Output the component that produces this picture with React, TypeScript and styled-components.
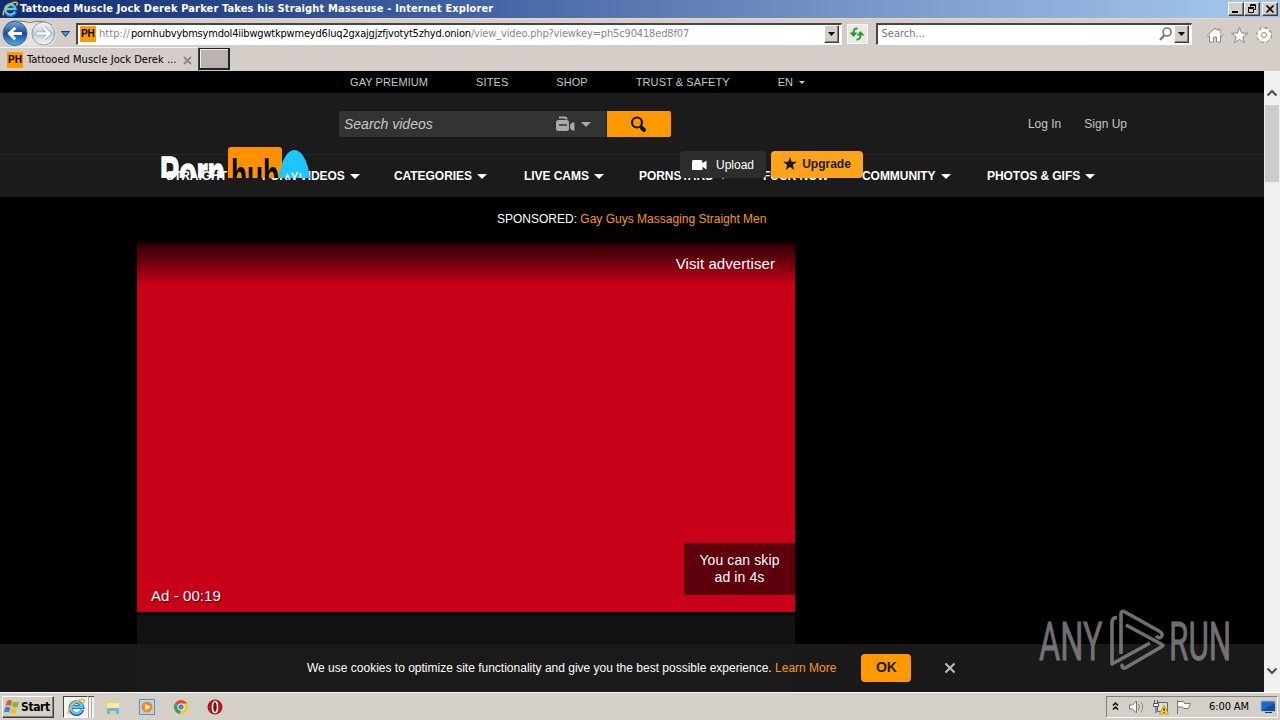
import React from 'react';
import styled, { createGlobalStyle, css } from 'styled-components';

const Colors = {
  chrome: '#d4d0c8',
  toolbar: '#d5cdc8',
  orange: '#ff9900',
  header: '#1b1b1b',
  text: '#c6c6c6',
  white: '#ffffff',
};

const uiFont = `'DejaVu Sans Condensed', 'DejaVu Sans', sans-serif`;
const siteFont = `'Liberation Sans', Arial, sans-serif`;

const GlobalStyle = createGlobalStyle`
  * {
    box-sizing: border-box;
  }

  body {
    margin: 0;
    overflow: hidden;
    background: #000;
  }

  svg {
    display: block;
    flex: none;
  }
`;

const raised = css`
  border: 1px solid;
  border-color: #fff #404040 #404040 #fff;
  box-shadow: inset -1px -1px 0 #808080;
`;

const Screen = styled.div`
  display: flex;
  flex-direction: column;
  width: 1280px;
  height: 720px;
  overflow: hidden;
  font-family: ${siteFont};
`;

const UiText = styled.span<{ $track?: number; $color?: string; $width?: number; $indent?: number }>`
  flex: none;
  width: ${({ $width }) => ($width ? `${$width}px` : 'auto')};
  padding-left: ${({ $indent = 0 }) => $indent}px;
  font-family: ${uiFont};
  font-stretch: condensed;
  font-size: 11px;
  line-height: 14px;
  white-space: nowrap;
  letter-spacing: ${({ $track = 0 }) => $track}px;
  color: ${({ $color = '#000' }) => $color};
`;

/* window chrome */

const TitleBar = styled.div`
  display: flex;
  align-items: center;
  height: 18px;
  padding: 0 2px;
  background: linear-gradient(90deg, #0f2c70 0%, #4464a4 38%, #7896c8 67%, #a6caf0 100%);
`;

const TitleText = styled(UiText)`
  flex: 1;
  margin-left: 2px;
  font-weight: bold;
  color: #fff;
`;

const WindowButtons = styled.div`
  display: flex;
`;

const WindowButton = styled.div<{ $gap?: number }>`
  ${raised}
  display: flex;
  align-items: center;
  justify-content: center;
  width: 16px;
  height: 14px;
  margin-left: ${({ $gap = 0 }) => $gap}px;
  background: ${Colors.chrome};
`;

const Toolbar = styled.div`
  display: flex;
  align-items: center;
  height: 29px;
  padding: 1px 6px 0 2px;
  background: ${Colors.toolbar};
  border-top: 1px solid #ddd8c8;
`;

const NavButtons = styled.div`
  width: 74px;
`;

const Field = styled.div<{ $width: number }>`
  display: flex;
  align-items: center;
  width: ${({ $width }) => $width}px;
  height: 22px;
  padding: 0 2px;
  background: #fff;
  border: 1px solid #fff;
  border-top: 2px solid #4c4444;
  border-left: 2px solid #4c4444;
`;

const FieldSpacer = styled.div`
  flex: 1;
`;

const DropButton = styled.div`
  ${raised}
  display: flex;
  align-items: center;
  justify-content: center;
  width: 15px;
  height: 18px;
  background: ${Colors.chrome};
`;

const Favicon = styled.div`
  display: flex;
  align-items: center;
  justify-content: center;
  flex: none;
  width: 16px;
  height: 16px;
  background: ${Colors.orange};
  color: #000;
  font: bold 10px/16px ${siteFont};
`;

const Refresh = styled.div`
  display: flex;
  align-items: center;
  justify-content: center;
  width: 21px;
  height: 20px;
  margin: 0 8px 0 5px;
  background: #e9e9e6;
  border: 1px solid #f7f7f5;
`;

const ToolIcons = styled.div`
  display: flex;
  margin-left: 14px;
  padding-top: 2px;
`;

const TabStrip = styled.div`
  display: flex;
  height: 24px;
  background: ${Colors.toolbar};
`;

const Tab = styled.div`
  display: flex;
  align-items: center;
  width: 199px;
  padding: 1px 6px 0 7px;
  border-top: 1px solid #f4f2ee;
  border-right: 1px solid #444;
`;

const NewTab = styled.div`
  width: 31px;
  height: 22px;
  margin-top: 1px;
  background: #bab3af;
  border: 1px solid #222;
  border-width: 1px 2px 2px 1px;
  box-shadow: inset 1px 1px 0 #eee;
`;

/* site */

const Viewport = styled.div`
  display: flex;
  height: 621px;
  background: #000;
`;

const Page = styled.div`
  position: relative;
  width: 1264px;
  overflow: hidden;
  color: ${Colors.white};
`;

const TopLinks = styled.div`
  display: flex;
  align-items: center;
  gap: 48px;
  height: 22px;
  padding-left: 350px;
  font-size: 11px;
  letter-spacing: 0.08px;
  color: ${Colors.text};
`;

const TopLink = styled.span`
  display: flex;
  align-items: center;
  gap: 6px;
  white-space: nowrap;
`;

const Caret = styled.i<{ $size: number; $color?: string }>`
  width: 0;
  height: 0;
  border: ${({ $size }) => $size}px solid transparent;
  border-bottom: 0;
  border-top-color: ${({ $color = '#fff' }) => $color};
`;

const Header = styled.div`
  display: flex;
  height: 61px;
  padding: 18px 137px 0 339px;
  background: ${Colors.header};
`;

const SearchInput = styled.div`
  display: flex;
  align-items: center;
  gap: 6px;
  width: 268px;
  height: 26px;
  padding: 0 15px 0 5px;
  background: #333;
  border-radius: 2px 0 0 2px;
  border-right: 1px solid #222;
  font-size: 14px;
  font-style: italic;
  color: #c8c8c8;
`;

const SearchButton = styled.div`
  display: flex;
  align-items: center;
  justify-content: center;
  width: 64px;
  height: 26px;
  padding-right: 2px;
  background: ${Colors.orange};
  border-radius: 0 2px 2px 0;
`;

const Account = styled.div`
  display: flex;
  flex: 1;
  justify-content: flex-end;
  gap: 23px;
  font-size: 12px;
  line-height: 26px;
  color: ${Colors.text};
`;

const Menu = styled.div`
  display: flex;
  align-items: center;
  height: 43px;
  padding-left: 166px;
  background: ${Colors.header};
  border-top: 1px solid #262626;
`;

const MenuItem = styled.div<{ $width: number }>`
  display: flex;
  align-items: center;
  gap: 5px;
  flex: none;
  width: ${({ $width }) => $width}px;
  font-size: 12px;
  font-weight: bold;
  letter-spacing: -0.05px;
  white-space: nowrap;
`;

const LogoOverlay = styled.div`
  position: absolute;
  top: 75px;
  left: 160px;
`;

const HeaderButton = styled.div<{ $left: number; $width: number; $primary?: boolean }>`
  position: absolute;
  top: 80px;
  left: ${({ $left }) => $left}px;
  display: flex;
  align-items: center;
  justify-content: center;
  gap: ${({ $primary }) => ($primary ? 5 : 9)}px;
  width: ${({ $width }) => $width}px;
  height: 27px;
  padding-bottom: ${({ $primary }) => ($primary ? 2 : 0)}px;
  border-radius: 4px;
  font-size: 12px;
  font-weight: ${({ $primary }) => ($primary ? 'bold' : 'normal')};
  color: ${({ $primary }) => ($primary ? '#1b1b1b' : '#fff')};
  background: ${({ $primary }) => ($primary ? '#ffa31a' : '#2d2d2d')};
`;

const Sponsored = styled.div`
  height: 41px;
  padding-left: 497px;
  font-size: 12px;
  line-height: 45px;
`;

const OrangeLink = styled.span`
  color: #f7971d;
`;

const Player = styled.div`
  display: flex;
  flex-direction: column;
  width: 658px;
  height: 374px;
  margin-left: 137px;
  background: linear-gradient(180deg, #000 0, #100002 4px, #3a0006 8px, #5a000a 19px, #8f0012 32px, #c80018 47px);
  font-size: 15px;
`;

const Advertiser = styled.div`
  padding: 17px 20px 0 0;
  text-align: right;
  line-height: 18px;
  letter-spacing: 0.07px;
`;

const PlayerBottom = styled.div`
  display: flex;
  flex: 1;
  align-items: flex-end;
  justify-content: space-between;
  text-shadow: 1px 1px 1px #400;
`;

const AdTime = styled.div`
  padding: 0 0 8px 14px;
  line-height: 17px;
  letter-spacing: 0.07px;
`;

const SkipBox = styled.div`
  width: 111px;
  height: 52px;
  margin-bottom: 17px;
  padding-top: 9px;
  background: #5e000c;
  font-size: 14px;
  line-height: 17px;
  letter-spacing: 0.1px;
  text-align: center;
  text-shadow: none;
`;

const BelowPlayer = styled.div`
  width: 658px;
  height: 80px;
  margin: 3px 0 0 137px;
  background: #111;
`;

const CookieBar = styled.div`
  position: absolute;
  left: 0;
  right: 0;
  bottom: 0;
  display: flex;
  align-items: center;
  height: 48px;
  padding-left: 307px;
  background: rgba(27, 27, 27, 0.93);
  font-size: 12px;
  white-space: pre;
`;

const OkButton = styled.div`
  width: 50px;
  height: 28px;
  margin: 0 34px 0 25px;
  border-radius: 4px;
  background: ${Colors.orange};
  color: #1b1b1b;
  font-size: 14px;
  font-weight: bold;
  line-height: 27px;
  text-align: center;
`;

const Watermark = styled.div`
  position: absolute;
  top: 536px;
  left: 1036px;
`;

const Scrollbar = styled.div`
  display: flex;
  flex-direction: column;
  align-items: center;
  width: 16px;
  padding: 18px 0 17px;
  background: #f0f0f0;
`;

const Thumb = styled.div`
  flex: none;
  width: 14px;
  height: 77px;
  margin: 8px 0 auto;
  background: #cdcdcd;
`;

/* taskbar */

const Taskbar = styled.div`
  display: flex;
  align-items: center;
  height: 28px;
  padding: 2px 2px 2px;
  background: ${Colors.chrome};
  border-top: 1px solid #fff;
`;

const StartButton = styled.div`
  ${raised}
  display: flex;
  align-items: center;
  gap: 1px;
  width: 52px;
  height: 22px;
  padding-left: 1px;
  background: ${Colors.chrome};
`;

const StartText = styled(UiText)`
  font-size: 12px;
  font-weight: bold;
`;

const ActiveTask = styled.div`
  display: flex;
  align-items: center;
  width: 25px;
  height: 22px;
  margin-left: 9px;
  padding-left: 3px;
  background: #f5f4f0;
  border: 1px solid;
  border-color: #404040 #fff #fff #404040;
`;

const TaskEdge = styled.div`
  width: 3px;
  height: 22px;
  background: #f5f4f0;
  border-top: 1px solid #404040;
  border-left: 1px solid #aaa;
`;

const Pinned = styled.div`
  display: flex;
  flex: 1;
  align-items: center;
  gap: 18px;
  padding-left: 11px;
`;

const Tray = styled.div`
  display: flex;
  align-items: center;
  width: 172px;
  height: 22px;
  padding-left: 5px;
  border: 1px solid;
  border-color: #808080 #fff #fff #808080;
`;

const IeIcon = ({ size }: { size: number }) => (
  <svg width={size} height={size} viewBox="0 0 16 16" fill="none">
    <path d="M13.5 10.5A5.3 5.3 0 1 1 13.6 8H4" stroke="#1469b5" strokeWidth="3.4" />
    <path d="M13 10.6A5.1 5.1 0 1 1 13.4 8H4" stroke="#66c5f0" strokeWidth="2.1" />
    <path d="M1.5 14.5C-.5 11 8 1 14 1.2c2 .1 1.3 2.3.5 3.5" stroke="#e9bd28" strokeWidth="1.4" />
  </svg>
);

const BackForward = () => (
  <svg width="72" height="28" viewBox="0 0 72 28">
    <defs>
      <linearGradient id="back" x1="0" y1="0" x2="0" y2="1">
        <stop offset="0" stopColor="#7da8dc" />
        <stop offset=".5" stopColor="#174b9b" />
        <stop offset="1" stopColor="#4bb1ee" />
      </linearGradient>
      <linearGradient id="fwd" x1="0" y1="0" x2="0" y2="1">
        <stop offset="0" stopColor="#f5f7f9" />
        <stop offset=".5" stopColor="#c2cbd6" />
        <stop offset="1" stopColor="#f3f7fa" />
      </linearGradient>
    </defs>
    <path d="M13 1h29a12.5 12.5 0 0 1 0 25.500H13z" fill="#e6e3df" />
    <path d="M4 5Q8 .8 13 .8Q20 1 28 2.500Q42-1 50 5" stroke="#77777a" fill="none" />
    <circle cx="13" cy="13.500" r="12" fill="url(#back)" stroke="#426493" />
    <circle cx="41.500" cy="13.500" r="11.500" fill="url(#fwd)" stroke="#929ba7" />
    <path d="M20 13.500H8M13.200 7.800 7.500 13.500l5.700 5.700" stroke="#fff" strokeWidth="3" fill="none" />
    <path d="M35 13.500h12M41.800 7.800l5.700 5.700-5.700 5.700" stroke="#9ba4ae" strokeWidth="4" fill="none" />
    <path d="M35 13.500h12M41.800 7.800l5.700 5.700-5.700 5.700" stroke="#fff" strokeWidth="2.600" fill="none" />
    <path d="M59.500 11.500h8l-4 5z" fill="#35a0dc" stroke="#163a67" />
  </svg>
);

const SmallArrow = () => (
  <svg width="7" height="4" viewBox="0 0 7 4">
    <path d="M0 0h7L3.500 4z" fill="#000" />
  </svg>
);

const SiteLogo = () => (
  <svg width="152" height="32" viewBox="0 0 152 32">
    <text x="0" y="43" textLength="65" lengthAdjust="spacingAndGlyphs" fontFamily="Liberation Sans" fontWeight="bold" fontSize="46" fill="#fff" stroke="#fff" strokeWidth="1.5">
      Porn
    </text>
    <path d="M68 32V4a3 3 0 0 1 3-3h48a3 3 0 0 1 3 3v28z" fill="#ff9000" />
    <text x="71" y="46" textLength="48" lengthAdjust="spacingAndGlyphs" fontFamily="Liberation Sans" fontWeight="bold" fontSize="46" fill="#000">
      hub
    </text>
    <path d="M119 32C121 13 128 4 134.500 4s13 9 15.500 28z" fill="#20c4ff" />
    <path d="M126 32l1.500-3 1.500 3M132 26.500l2.500 5.500 3-6M140.500 27v5" stroke="#fff" strokeWidth="1.500" fill="none" />
  </svg>
);

const AnyRun = () => (
  <svg width="200" height="68" viewBox="0 0 200 68" opacity=".8">
    <g fill="#8b8b8b" stroke="#8b8b8b" strokeWidth=".8" fontFamily="Roboto" fontSize="53">
      <text transform="translate(3 53) scale(.61 1)" textLength="104" lengthAdjust="spacingAndGlyphs">ANY</text>
      <text transform="translate(133 53) scale(.61 1)" textLength="102" lengthAdjust="spacingAndGlyphs">RUN</text>
    </g>
    <g fill="none" stroke="#8b8b8b" strokeWidth="3.600" strokeLinejoin="round">
      <path d="M81 11q-5-1-5 5v41l38-21" />
      <path d="M85 47V7q0-4 4-2l34 19q5 3 2 6-2 2-5-1" />
      <path d="M90 18l36 19.500q2 1 0 2L90 60.500q-4 2-4-2l1-1.500" />
    </g>
  </svg>
);

const menu = [
  { label: 'STRAIGHT', width: 96 },
  { label: 'PORN VIDEOS', width: 132, caret: true },
  { label: 'CATEGORIES', width: 130, caret: true },
  { label: 'LIVE CAMS', width: 115, caret: true },
  { label: 'PORNSTARS', width: 124, caret: true },
  { label: 'FUCK NOW', width: 99 },
  { label: 'COMMUNITY', width: 125, caret: true },
  { label: 'PHOTOS & GIFS', width: 130, caret: true },
];

const BrowserChrome = () => (
  <>
    <TitleBar>
      <IeIcon size={16} />
      <TitleText $track={0.14}>
        Tattooed Muscle Jock Derek Parker Takes his Straight Masseuse - Internet Explorer
      </TitleText>
      <WindowButtons>
        <WindowButton>
          <svg width="10" height="10"><path d="M1 7h6v2H1z" /></svg>
        </WindowButton>
        <WindowButton>
          <svg width="10" height="10" fill="none" stroke="#000">
            <path d="M3.500 3V.500h5v5H7M3 1.500h6M1.500 4.500h5v4h-5zM1 3.500h6" />
          </svg>
        </WindowButton>
        <WindowButton $gap={2}>
          <svg width="10" height="10"><path d="M1.500 1.500l7 7m0-7l-7 7" stroke="#000" strokeWidth="1.700" /></svg>
        </WindowButton>
      </WindowButtons>
    </TitleBar>
    <Toolbar>
      <NavButtons>
        <BackForward />
      </NavButtons>
      <Field $width={767}>
        <Favicon>PH</Favicon>
        <UiText $track={0.1} $color="#888" $width={35} $indent={3}>http://</UiText>
        <UiText $track={-0.2} $width={340}>pornhubvybmsymdol4iibwgwtkpwmeyd6luq2gxajgjzfjvotyt5zhyd.onion</UiText>
        <UiText $track={-0.15} $color="#888">/view_video.php?viewkey=ph5c90418ed8f07</UiText>
        <FieldSpacer />
        <DropButton><SmallArrow /></DropButton>
      </Field>
      <Refresh>
        <svg width="16" height="14" viewBox="0 0 16 14" fill="none" stroke="#2b9a2b" strokeWidth="2">
          <path d="M8.500 1.500Q4.500 1 4.500 6M7.500 12.500q4 .500 4-5" />
          <path d="M.500 5.500h8L4.500 10zM7.500 8.500l4-4.500 4 4.500z" fill="#2b9a2b" stroke="none" />
        </svg>
      </Refresh>
      <Field $width={317}>
        <UiText $color="#777" $indent={2}>Search...</UiText>
        <FieldSpacer />
        <svg width="16" height="16" fill="none" stroke="#777" strokeWidth="1.600">
          <circle cx="9" cy="6" r="4" /><path d="M6.500 9L2 14" strokeWidth="2.200" />
        </svg>
        <DropButton><SmallArrow /></DropButton>
      </Field>
      <ToolIcons>
        <svg width="68" height="18" viewBox="0 0 68 18" fill="#fff" stroke="#8a8a8a">
          <path d="M1 9.500L9 2l3 2.500V3h2v3.500L17 9.500l-1 1-1.500-1V16h-4v-5h-3v5h-4V9.500l-1.500 1z" />
          <path d="M33.500 1.500l2.100 5.600 5.900.2-4.700 3.700 1.700 5.700-5-3.300-5 3.300 1.700-5.700-4.700-3.700 5.900-.2z" />
          <circle cx="58" cy="9" r="6.500" strokeWidth="3" strokeDasharray="2.700 2.400" />
          <circle cx="58" cy="9" r="6.300" stroke="#fff" strokeWidth="1.600" strokeDasharray="2.100 3" strokeDashoffset="-.3" />
          <circle cx="58" cy="9" r="5" stroke="#fff" />
          <circle cx="58" cy="9" r="2.500" />
        </svg>
      </ToolIcons>
    </Toolbar>
    <TabStrip>
      <Tab>
        <Favicon>PH</Favicon>
        <UiText $track={0.04} $indent={4}>Tattooed Muscle Jock Derek ...</UiText>
        <FieldSpacer />
        <svg width="9" height="9"><path d="M1 1l7 7m0-7L1 8" stroke="#888" strokeWidth="1.800" /></svg>
      </Tab>
      <NewTab />
    </TabStrip>
  </>
);

const Site = () => (
  <Page>
    <TopLinks>
      <TopLink>GAY PREMIUM</TopLink>
      <TopLink>SITES</TopLink>
      <TopLink>SHOP</TopLink>
      <TopLink>TRUST &amp; SAFETY</TopLink>
      <TopLink>EN <Caret $size={3} $color={Colors.text} /></TopLink>
    </TopLinks>
    <Header>
      <SearchInput>
        Search videos
        <FieldSpacer />
        <svg width="20" height="16" viewBox="0 0 20 16">
          <rect x="1" y="4" width="13" height="11" rx="2.500" fill="#aaa" />
          <path d="M15 9l2-2.500h2.500v8H17L15 12z" fill="#aaa" />
          <path d="M4 1.500h6q1.500 0 1.500 2" stroke="#aaa" strokeWidth="2" fill="none" />
          <path d="M4 9h8" stroke="#333" strokeWidth="1.500" />
        </svg>
        <Caret $size={5} $color="#aaa" />
      </SearchInput>
      <SearchButton>
        <svg width="17" height="17" fill="none" stroke="#111">
          <circle cx="7" cy="6.500" r="5" strokeWidth="2.200" />
          <path d="M10.500 10l1.500 1.500" strokeWidth="2" />
          <path d="M12 12l2 2" strokeWidth="4" strokeLinecap="round" />
        </svg>
      </SearchButton>
      <Account>
        <span>Log In</span>
        <span>Sign Up</span>
      </Account>
    </Header>
    <Menu>
      {menu.map(({ label, width, caret }) => (
        <MenuItem key={label} $width={width}>
          {label}
          {caret && <Caret $size={5} />}
        </MenuItem>
      ))}
    </Menu>
    <LogoOverlay>
      <SiteLogo />
    </LogoOverlay>
    <HeaderButton $left={680} $width={86}>
      <svg width="15" height="10" fill="#fff"><path d="M0 1.500Q0 0 1.500 0H9q1.500 0 1.500 1.500v1.800L14.500.500v9l-4-2.800V10H0z" /></svg>
      Upload
    </HeaderButton>
    <HeaderButton $left={771} $width={92} $primary>
      <svg width="14" height="13" viewBox="0 0 14 13">
        <path d="M7 0l1.700 4.700H14L9.800 7.900l1.500 5.100L7 10l-4.300 3 1.500-5.100L0 4.700h5.300z" fill="#1b1b1b" />
      </svg>
      Upgrade
    </HeaderButton>
    <Sponsored>
      SPONSORED: <OrangeLink>Gay Guys Massaging Straight Men</OrangeLink>
    </Sponsored>
    <Player>
      <Advertiser>Visit advertiser</Advertiser>
      <PlayerBottom>
        <AdTime>Ad - 00:19</AdTime>
        <SkipBox>
          You can skip
          <br />
          ad in 4s
        </SkipBox>
      </PlayerBottom>
    </Player>
    <BelowPlayer />
    <CookieBar>
      We use cookies to optimize site functionality and give you the best possible experience.{' '}
      <OrangeLink>Learn More</OrangeLink>
      <OkButton>OK</OkButton>
      <svg width="10" height="10"><path d="M.500.500l9 9m0-9l-9 9" stroke="#c0c0c0" strokeWidth="2" /></svg>
    </CookieBar>
    <Watermark>
      <AnyRun />
    </Watermark>
  </Page>
);

const Desktop = () => (
  <Taskbar>
    <StartButton>
      <svg width="16" height="16" viewBox="0 0 16 16">
        <path d="M3 2q3-2 5 0L7 7Q4 5.500 1.500 7z" fill="#e8592a" />
        <path d="M9 2.500q3 1.500 6 0L13.500 8q-3 1-5.500-.500z" fill="#7cb83a" />
        <path d="M1 8.500q3-1.500 5.500 0L5 13.500q-2.500-1.500-5 0z" fill="#3a86d8" />
        <path d="M7.500 9q3 1.500 5.500.300L11.500 14.500q-3 1-5.500-.500z" fill="#f6bd2b" />
      </svg>
      <StartText $track={-0.4}>Start</StartText>
    </StartButton>
    <ActiveTask>
      <IeIcon size={18} />
    </ActiveTask>
    <TaskEdge />
    <TaskEdge />
    <Pinned>
      <svg width="16" height="16">
        <path d="M1 3V1h5l1 2h7v12H1z" fill="#e9cf72" />
        <path d="M2 4h12v6H2z" fill="#f7eba9" />
        <path d="M2 15V9h12v6h-3v-3H5v3z" fill="#68b6e3" />
      </svg>
      <svg width="16" height="16">
        <path d="M.500.500h15v15H.500z" fill="#b7d4ef" stroke="#5b91c5" />
        <circle cx="8" cy="8" r="5.500" fill="#f4891d" /><path d="M6.500 5l5 3-5 3z" fill="#fff" />
      </svg>
      <svg width="16" height="16" viewBox="0 0 16 16">
        <circle cx="8" cy="8" r="7" fill="#f5c92f" />
        <path d="M8 8L1.900 4.500A7 7 0 0 1 14.100 4.500H8z" fill="#dd4a3d" />
        <path d="M8 8l-1 7A7 7 0 0 1 1.900 4.500z" fill="#3c9f56" />
        <circle cx="8" cy="8" r="3.600" fill="#fff" /><circle cx="8" cy="8" r="2.700" fill="#4387e8" />
      </svg>
      <svg width="16" height="16">
        <circle cx="8" cy="8" r="7.500" fill="#b9151a" />
        <ellipse cx="8" cy="8" rx="2.500" ry="5.500" fill="#7e0a0e" stroke="#fff" strokeWidth="1.600" />
      </svg>
    </Pinned>
    <Tray>
      <svg width="97" height="18" viewBox="0 0 97 18" fill="none">
        <path d="M1 7.500l2.500-2.500L6 7.500M1 11.500L3.500 9 6 11.500" stroke="#000" strokeWidth="1.500" />
        <path d="M17.500 7h3l4-4v12l-4-4h-3z" fill="#fff" stroke="#777" />
        <path d="M26.500 6q2 3 0 6M29 4q3.500 5 0 10" stroke="#888" />
        <path d="M45.500 4.500h10v9h-10z" fill="#ddd" stroke="#666" />
        <path d="M42.500 2v3M45.500 2v3M41.500 5.500h5v3h-5zM44 9v6" fill="#fff" stroke="#555" />
        <path d="M52 7l4.500 9h-9z" fill="#ffd21d" stroke="#b28a00" strokeWidth=".6" /><path d="M52 10v3m0 1v1" stroke="#000" />
        <path d="M65.500 2v14M65.500 3.500h6l1 2h6l-2 5h-5l-1-1.500h-5z" fill="#fff" stroke="#777" />
      </svg>
      <UiText $width={51} $track={-0.1}>6:00 AM</UiText>
      <svg width="16" height="14">
        <path d="M1 1h14v10H1z" fill="#2168c4" stroke="#8fb5d9" /><path d="M1 11L15 3v8z" fill="#164b9b" /><path d="M5 12.500h7" stroke="#333" />
      </svg>
    </Tray>
  </Taskbar>
);

const App: React.FC = () => (
  <Screen>
    <GlobalStyle />
    <BrowserChrome />
    <Viewport>
      <Site />
      <Scrollbar>
        <svg width="12" height="8"><path d="M1.500 6.500L6 2l4.500 4.500" fill="none" stroke="#505050" strokeWidth="2.200" /></svg>
        <Thumb />
        <svg width="12" height="8"><path d="M1.500 1.500L6 6l4.500-4.500" fill="none" stroke="#505050" strokeWidth="2.200" /></svg>
      </Scrollbar>
    </Viewport>
    <Desktop />
  </Screen>
);

export default App;
